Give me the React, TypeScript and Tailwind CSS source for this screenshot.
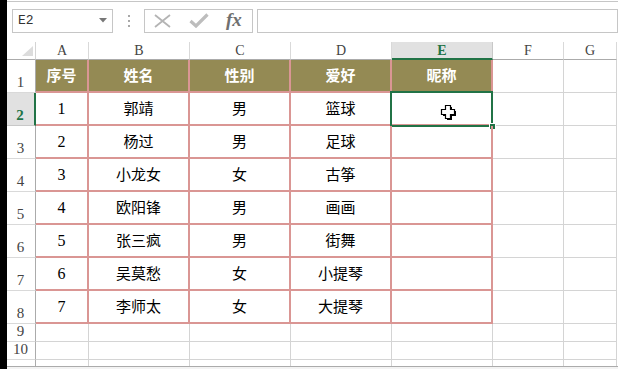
import React from "react"

const rows = [
  ["1", "郭靖", "男", "篮球"],
  ["2", "杨过", "男", "足球"],
  ["3", "小龙女", "女", "古筝"],
  ["4", "欧阳锋", "男", "画画"],
  ["5", "张三疯", "男", "街舞"],
  ["6", "吴莫愁", "女", "小提琴"],
  ["7", "李师太", "女", "大提琴"],
]

const cols = [
  { key: "A", w: "w-[53px]" },
  { key: "B", w: "w-[101px]" },
  { key: "C", w: "w-[101px]" },
  { key: "D", w: "w-[101px]" },
  { key: "E", w: "w-[101px]" },
  { key: "F", w: "w-[71px]" },
  { key: "G", w: "w-[53px]" },
]

const mono = { fontFamily: '"Liberation Mono", "DejaVu Sans Mono", monospace' }
const serif = { fontFamily: '"Liberation Serif", "DejaVu Serif", serif' }
const cjk = { fontFamily: '"Noto Sans CJK SC", "Noto Sans", sans-serif' }

function RowHead({ n, active }: { n: string; active?: boolean }) {
  return (
    <div
      className={`h-full w-[29px] shrink-0 flex items-end justify-center pb-[2px] text-[15px] leading-none ${
        active
          ? "bg-[#e1e1e1] border-r-2 border-r-[#217346] border-b border-b-[#c8c8c8] text-[#217346] font-bold"
          : "bg-white border-r border-r-[#ababab] border-b border-b-[#d9d9d9] text-[#444]"
      }`}
      style={serif}
    >
      <span className="pr-[1px]">{n}</span>
    </div>
  )
}

function Cursor() {
  return (
    <svg width="18" height="17" viewBox="0 0 18 17" className="absolute left-[47px] top-[11px]">
      <path d="M6.5 1.5h5v4h4v5h-4v4h-5v-4h-4v-5h4z" fill="#000" transform="translate(1.5 1.5)" />
      <path d="M6.5 1.5h5v4h4v5h-4v4h-5v-4h-4v-5h4z" fill="#fff" stroke="#000" strokeWidth="1.2" />
    </svg>
  )
}

export default function App() {
  return (
    <div className="flex w-[618px] h-[369px] overflow-hidden bg-white">
      <div className="w-[7px] shrink-0 bg-black" />

      <div className="flex-1 flex flex-col">
        {/* Formula bar */}
        <div className="mt-[1px] border-t border-[#c6c6c6] h-[41px] shrink-0">
          <div className="flex items-center pt-[6px] h-[31px]">
            <div className="ml-[5px] w-[101px] h-[24px] border border-[#c6c6c6] flex items-center justify-between pl-[5px] pr-[5px]">
              <span className="text-[13px] text-[#333]" style={mono}>E2</span>
              <svg width="8" height="5" viewBox="0 0 8 5">
                <path d="M0 0h8L4 4.5z" fill="#777" />
              </svg>
            </div>
            <div className="w-[31px] flex flex-col items-center gap-[3px]">
              <span className="w-[2px] h-[2px] bg-[#a8a8a8]" />
              <span className="w-[2px] h-[2px] bg-[#a8a8a8]" />
              <span className="w-[2px] h-[2px] bg-[#a8a8a8]" />
            </div>
            <div className="w-[109px] h-[24px] border border-[#c6c6c6] flex items-center pl-[8px] gap-[17px]">
              <svg width="19" height="14" viewBox="0 0 19 14">
                <path d="M2 1l15 12M17 1L2 13" stroke="#b4b4b4" strokeWidth="1.8" />
              </svg>
              <svg width="20" height="15" viewBox="0 0 20 15">
                <path d="M1.5 8l5.5 5L18.5 1.5" stroke="#bdbdbd" strokeWidth="3.2" fill="none" />
              </svg>
              <span className="text-[19px] italic font-bold text-[#707070] leading-none -mt-[2px]" style={serif}>
                fx
              </span>
            </div>
            <div className="ml-[4px] flex-1 h-[24px] border border-[#c6c6c6]" />
          </div>
        </div>

        {/* Column header */}
        <div className="flex h-[18px] shrink-0">
          <div className="w-[29px] h-[18px] border-r border-r-[#d4d4d4] border-b border-b-[#ababab] relative">
            <svg width="11" height="10" viewBox="0 0 11 10" className="absolute right-[2px] bottom-[3px]">
              <path d="M11 0v10H0z" fill="#dcdcdc" />
            </svg>
          </div>
          {cols.map((c) => (
            <div
              key={c.key}
              className={`${c.w} h-[18px] flex items-center justify-center text-[14px] ${
                c.key === "E"
                  ? "bg-[#e1e1e1] border-b-2 border-b-[#217346] border-r border-r-[#c8c8c8] text-[#217346] font-bold"
                  : "border-b border-b-[#ababab] border-r border-r-[#d9d9d9] text-[#444]"
              }`}
              style={serif}
            >
              {c.key}
            </div>
          ))}
        </div>

        {/* Row 1 header */}
        <div className="flex h-[33px] shrink-0">
          <RowHead n="1" />
          {["序号", "姓名", "性别", "爱好", "昵称"].map((t, i) => (
            <div
              key={t}
              className={`${cols[i].w} h-[33px] bg-[#948a54] border-r-2 border-b-2 border-[#da9694] flex items-center justify-center text-white font-bold text-[15px]`}
              style={cjk}
            >
              {t}
            </div>
          ))}
          <div className="w-[71px] h-[33px] border-r border-b border-[#d4d4d4]" />
          <div className="w-[53px] h-[33px] border-r border-b border-[#d4d4d4]" />
        </div>

        {/* Data rows */}
        {rows.map((r, ri) => (
          <div key={ri} className="flex h-[33px] shrink-0">
            <RowHead n={String(ri + 2)} active={ri === 0} />
            {[...r, ""].map((t, i) => (
              <div
                key={i}
                className={`${cols[i].w} h-[33px] relative border-r-2 border-b-2 border-[#da9694] flex items-center justify-center text-black ${
                  i === 0 ? "text-[16px] pt-[1px]" : "text-[15px]"
                }`}
                style={i === 0 ? serif : cjk}
              >
                {t}
                {ri === 0 && i === 4 && (
                  <>
                    <div className="absolute -left-[2px] -top-[2px] w-[103px] h-[36px] border-2 border-[#217346]" />
                    <div className="absolute left-[97px] top-[30px] w-[7px] h-[7px] bg-[#217346] border border-white" />
                    <Cursor />
                  </>
                )}
              </div>
            ))}
            <div className="w-[71px] h-[33px] border-r border-b border-[#d4d4d4]" />
            <div className="w-[53px] h-[33px] border-r border-b border-[#d4d4d4]" />
          </div>
        ))}

        {/* Empty rows */}
        {["9", "10"].map((n) => (
          <div key={n} className="flex shrink-0 h-[18px]">
            <RowHead n={n} />
            {cols.map((c) => (
              <div key={c.key} className={`${c.w} h-[18px] border-r border-b border-[#d4d4d4]`} />
            ))}
          </div>
        ))}
        <div className="flex shrink-0 h-[6px] overflow-hidden">
          <div className="w-[29px] shrink-0 border-r border-r-[#ababab]" />
          {cols.map((c) => (
            <div key={c.key} className={`${c.w} h-[6px] border-r border-[#d4d4d4]`} />
          ))}
        </div>

        <div className="flex-1 border-t border-[#ababab] bg-[#f3f3f3]" />
      </div>
    </div>
  )
}
